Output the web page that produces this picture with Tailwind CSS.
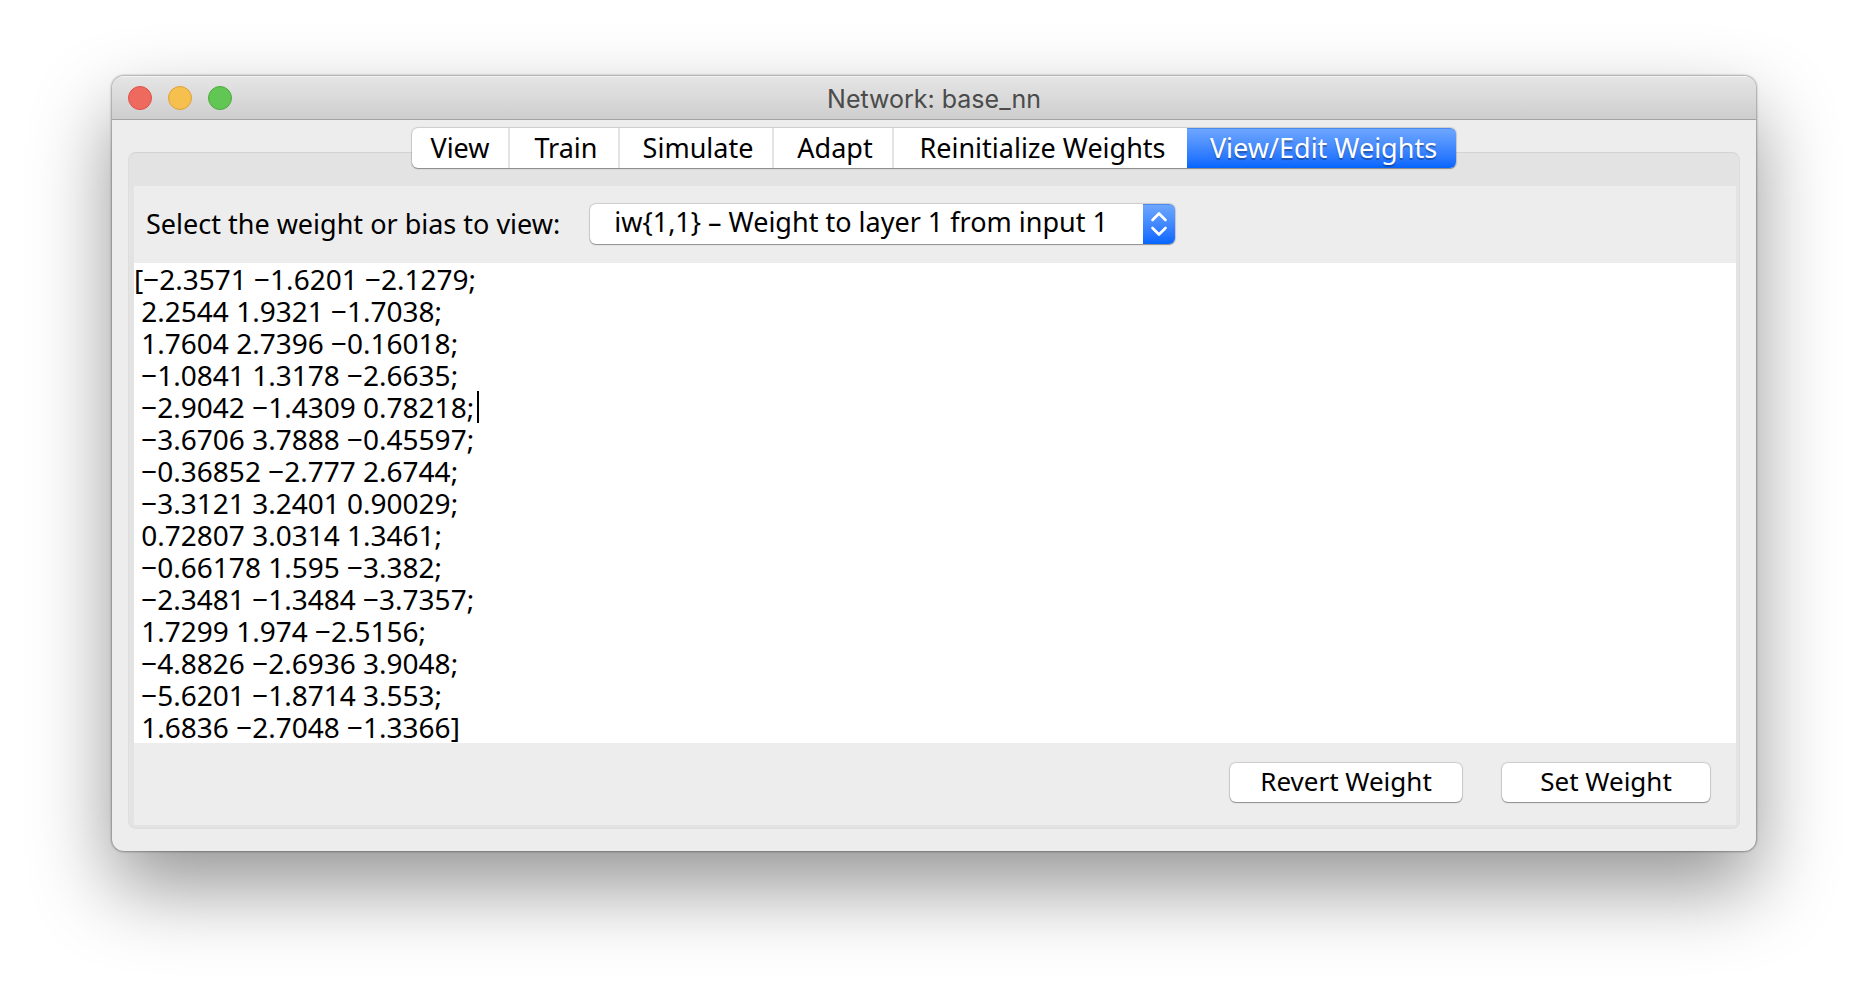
<!DOCTYPE html>
<html lang="en">
<head>
<meta charset="utf-8">
<title>Network: base_nn</title>
<script src="https://cdn.jsdelivr.net/npm/@tailwindcss/browser@4"></script>
</head>
<body class="min-h-screen bg-white px-28 pt-[76px] pb-20 font-['Noto_Sans',sans-serif] text-black">
<main class="overflow-hidden rounded-xl bg-[#ededed] shadow-[0_0_2px_1px_rgba(0,0,0,0.32),0_36px_80px_rgba(0,0,0,0.42)]">
  <header class="grid h-11 grid-cols-[1fr_auto_1fr] items-center border-t border-b border-t-[#f4f4f4] border-b-[#a4a4a4] bg-linear-to-b from-[#e5e5e5] to-[#cecece] px-4">
    <div class="flex gap-4">
      <button type="button" aria-label="Close" class="size-6 rounded-full border border-[#de5048] bg-[#ee6a5f]"></button>
      <button type="button" aria-label="Minimize" class="size-6 rounded-full border border-[#dca038] bg-[#f6c04f]"></button>
      <button type="button" aria-label="Zoom" class="size-6 rounded-full border border-[#4dab3c] bg-[#62c655]"></button>
    </div>
    <h1 class="pt-px font-[Inter,sans-serif] text-[25px] leading-8 text-[#4b4b4b]">Network: base_nn</h1>
  </header>

  <div class="px-4 pt-2 pb-[22px]">
    <!-- The tab bar straddles the top edge of the panel -->
    <nav role="tablist" aria-label="Network views" class="relative z-10 mx-auto -mb-4 flex h-10 w-fit rounded-md bg-white text-[27px] leading-9 shadow-[0_0_1px_1px_rgba(0,0,0,0.14),0_1px_1px_rgba(0,0,0,0.3)]">
      <button type="button" role="tab" class="w-[98px] border-r-2 border-[#e4e4e4] pb-px">View</button>
      <button type="button" role="tab" class="w-[110px] border-r-2 border-[#e4e4e4] pb-px pl-1">Train</button>
      <button type="button" role="tab" class="w-[154px] border-r-2 border-[#e4e4e4] pb-px pl-1">Simulate</button>
      <button type="button" role="tab" class="w-[120px] border-r-2 border-[#e4e4e4] pb-px pl-1">Adapt</button>
      <button type="button" role="tab" class="w-[293px] pb-px pl-1">Reinitialize Weights</button>
      <button type="button" role="tab" aria-selected="true" class="w-[269px] rounded-r-md border-t border-[#4a8af0] bg-linear-to-b from-[#6da6ff] to-[#0265ff] pb-px pl-1 text-white text-shadow-[0_2px_1px_rgba(0,0,0,0.3)]">View/Edit Weights</button>
    </nav>

    <section class="rounded-lg border border-t-[#d3d3d3] border-x-[#dedede] border-b-[#dedede] bg-[#e3e3e3] px-[3px] pt-[33px] pb-[3px]">
      <div class="ml-0.5 bg-[#ededed]">
        <div class="flex h-[77px] items-center px-3 pb-0.5 text-[27px]">
          <label for="weight" class="mr-[30px] whitespace-nowrap leading-8">Select the weight or bias to view:</label>
          <div class="relative">
            <select id="weight" class="block h-10 w-[585px] appearance-none rounded-md bg-white pr-9 pb-1 pl-6 leading-9 shadow-[0_0_1px_1px_rgba(0,0,0,0.14),0_1px_1px_rgba(0,0,0,0.3)]">
              <option>iw{1,1} – Weight to layer 1 from input 1</option>
            </select>
            <span class="pointer-events-none absolute inset-y-0 right-0 flex w-8 items-center justify-center rounded-r-md border-t border-[#4a8af0] bg-linear-to-b from-[#6da6ff] to-[#0265ff]">
              <svg class="h-[26px] w-[18px]" viewBox="0 0 18 26" fill="none" stroke="white" stroke-width="2.6" stroke-linecap="round" stroke-linejoin="round"><path d="M2.500 9 9 2.500 15.500 9M2.500 17 9 23.500 15.500 17"/></svg>
            </span>
          </div>
        </div>

        <div class="relative">
          <textarea rows="15" aria-label="Weight matrix" spellcheck="false" class="block w-full resize-none overflow-hidden bg-white text-[28px] leading-8 outline-none">[−2.3571 −1.6201 −2.1279;
 2.2544 1.9321 −1.7038;
 1.7604 2.7396 −0.16018;
 −1.0841 1.3178 −2.6635;
 −2.9042 −1.4309 0.78218;
 −3.6706 3.7888 −0.45597;
 −0.36852 −2.777 2.6744;
 −3.3121 3.2401 0.90029;
 0.72807 3.0314 1.3461;
 −0.66178 1.595 −3.382;
 −2.3481 −1.3484 −3.7357;
 1.7299 1.974 −2.5156;
 −4.8826 −2.6936 3.9048;
 −5.6201 −1.8714 3.553;
 1.6836 −2.7048 −1.3366]</textarea>
          <!-- Insertion point at the end of the fifth row -->
          <span class="absolute top-32 left-[343px] h-8 w-0.5 bg-black"></span>
        </div>

        <div class="flex h-[82px] items-start justify-end gap-10 pt-5 pr-[26px] text-[26px] leading-9">
          <button type="button" class="h-[39px] w-[232px] rounded-md bg-white pb-1 shadow-[0_0_1px_1px_rgba(0,0,0,0.14),0_1px_1px_rgba(0,0,0,0.3)]">Revert Weight</button>
          <button type="button" class="h-[39px] w-[208px] rounded-md bg-white pb-1 shadow-[0_0_1px_1px_rgba(0,0,0,0.14),0_1px_1px_rgba(0,0,0,0.3)]">Set Weight</button>
        </div>
      </div>
    </section>
  </div>
</main>
</body>
</html>
